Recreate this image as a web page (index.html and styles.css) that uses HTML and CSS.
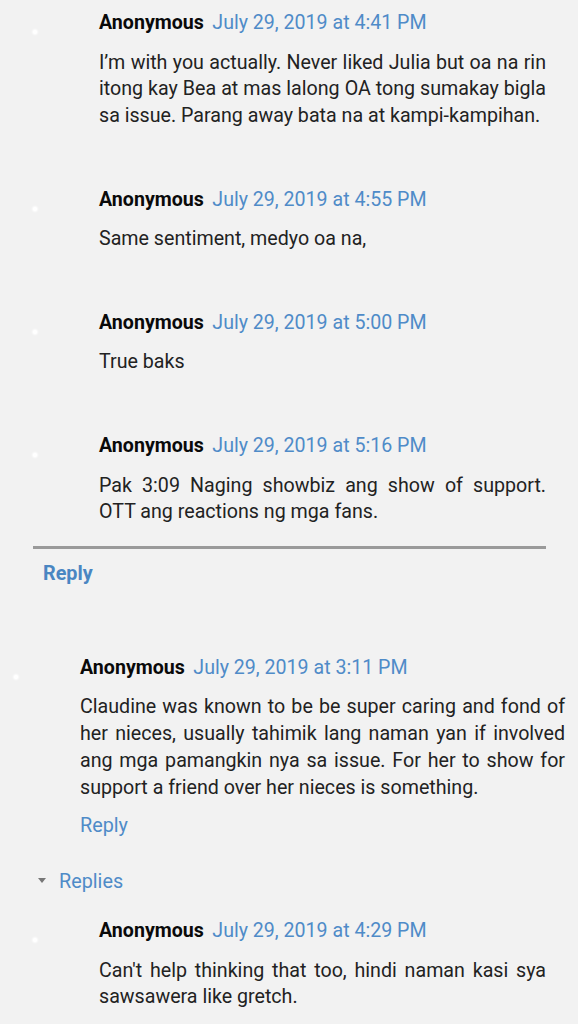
FILE: index.html
```html
<!DOCTYPE html>
<html>
<head>
<meta charset="utf-8">
<link rel="stylesheet" href="styles.css">
</head>
<body>
<div class="page">
  <div class="thread">
    <div class="comment">
      <div class="avatar"><span class="dot"></span></div>
      <div class="content">
        <div class="head"><span class="name">Anonymous</span><span class="date">July 29, 2019 at 4:41 PM</span></div>
        <p class="text">I’m with you actually. Never liked Julia but oa na rin itong kay Bea at mas lalong OA tong sumakay bigla sa issue. Parang away bata na at kampi-kampihan.</p>
      </div>
    </div>
    <div class="comment">
      <div class="avatar"><span class="dot"></span></div>
      <div class="content">
        <div class="head"><span class="name">Anonymous</span><span class="date">July 29, 2019 at 4:55 PM</span></div>
        <p class="text">Same sentiment, medyo oa na,</p>
      </div>
    </div>
    <div class="comment">
      <div class="avatar"><span class="dot"></span></div>
      <div class="content">
        <div class="head"><span class="name">Anonymous</span><span class="date">July 29, 2019 at 5:00 PM</span></div>
        <p class="text">True baks</p>
      </div>
    </div>
    <div class="comment">
      <div class="avatar"><span class="dot"></span></div>
      <div class="content">
        <div class="head"><span class="name">Anonymous</span><span class="date">July 29, 2019 at 5:16 PM</span></div>
        <p class="text">Pak 3:09 Naging showbiz ang show of support. OTT ang reactions ng mga fans.</p>
      </div>
    </div>
  </div>
  <div class="thread-reply">Reply</div>

  <div class="comment top">
    <div class="avatar"><span class="dot"></span></div>
    <div class="content">
      <div class="head"><span class="name">Anonymous</span><span class="date">July 29, 2019 at 3:11 PM</span></div>
      <p class="text">Claudine was known to be be super caring and fond of her nieces, usually tahimik lang naman yan if involved ang mga pamangkin nya sa issue. For her to show for support a friend over her nieces is something.</p>
      <div class="reply">Reply</div>
    </div>
  </div>
  <div class="replies-toggle"><span class="tri"></span><span class="replies-label">Replies</span></div>

  <div class="thread second">
    <div class="comment">
      <div class="avatar"><span class="dot"></span></div>
      <div class="content">
        <div class="head"><span class="name">Anonymous</span><span class="date">July 29, 2019 at 4:29 PM</span></div>
        <p class="text">Can't help thinking that too, hindi naman kasi sya sawsawera like gretch.</p>
      </div>
    </div>
  </div>
</div>
</body>
</html>
```

FILE: styles.css
```css
html, body {
  margin: 0;
  padding: 0;
  background: #f2f2f2;
}
body {
  font-family: Roboto, "Liberation Sans", sans-serif;
  font-size: 19.8px;
  color: #222;
}
.page {
  padding: 10px 13px 0 14px;
}
.thread {
  margin: 0 19px;
}
.thread:first-child {
  padding-bottom: 20px;
  border-bottom: 3px solid #9a9a9a;
}
.thread.second {
  margin-top: 23px;
}
.comment {
  display: flex;
}
.comment + .comment {
  margin-top: 57px;
}
.avatar {
  width: 66px;
  flex: none;
  position: relative;
}
.dot {
  position: absolute;
  left: 0;
  top: 20px;
  width: 4px;
  height: 4px;
  border-radius: 50%;
  background: #fff;
  box-shadow: 0 0 2px 1px rgba(255,255,255,0.8);
}
.content {
  flex: 1;
  min-width: 0;
}
.head {
  line-height: 26px;
  white-space: nowrap;
  font-size: 19.6px;
}
.name {
  font-weight: 700;
  color: #0a0a0a;
  margin-right: 8.5px;
}
.date {
  color: #4f8bc8;
}
.text {
  margin: 13.5px 0 0;
  font-size: 19.65px;
  line-height: 26.7px;
  text-align: justify;
}
.thread-reply {
  margin: 12px 0 0 29px;
  line-height: 26px;
  font-weight: 700;
  color: #4a86c2;
}
.comment.top {
  margin-top: 68px;
}
.reply {
  margin-top: 12px;
  line-height: 26px;
  color: #4f8bc8;
}
.replies-toggle {
  margin: 30px 0 0 24px;
  line-height: 26px;
  display: flex;
  align-items: center;
}
.tri {
  width: 0;
  height: 0;
  border-left: 4.5px solid transparent;
  border-right: 4.5px solid transparent;
  border-top: 5px solid #777;
  margin-right: 13px;
  margin-top: -3px;
}
.replies-label {
  color: #4f8bc8;
}
```
